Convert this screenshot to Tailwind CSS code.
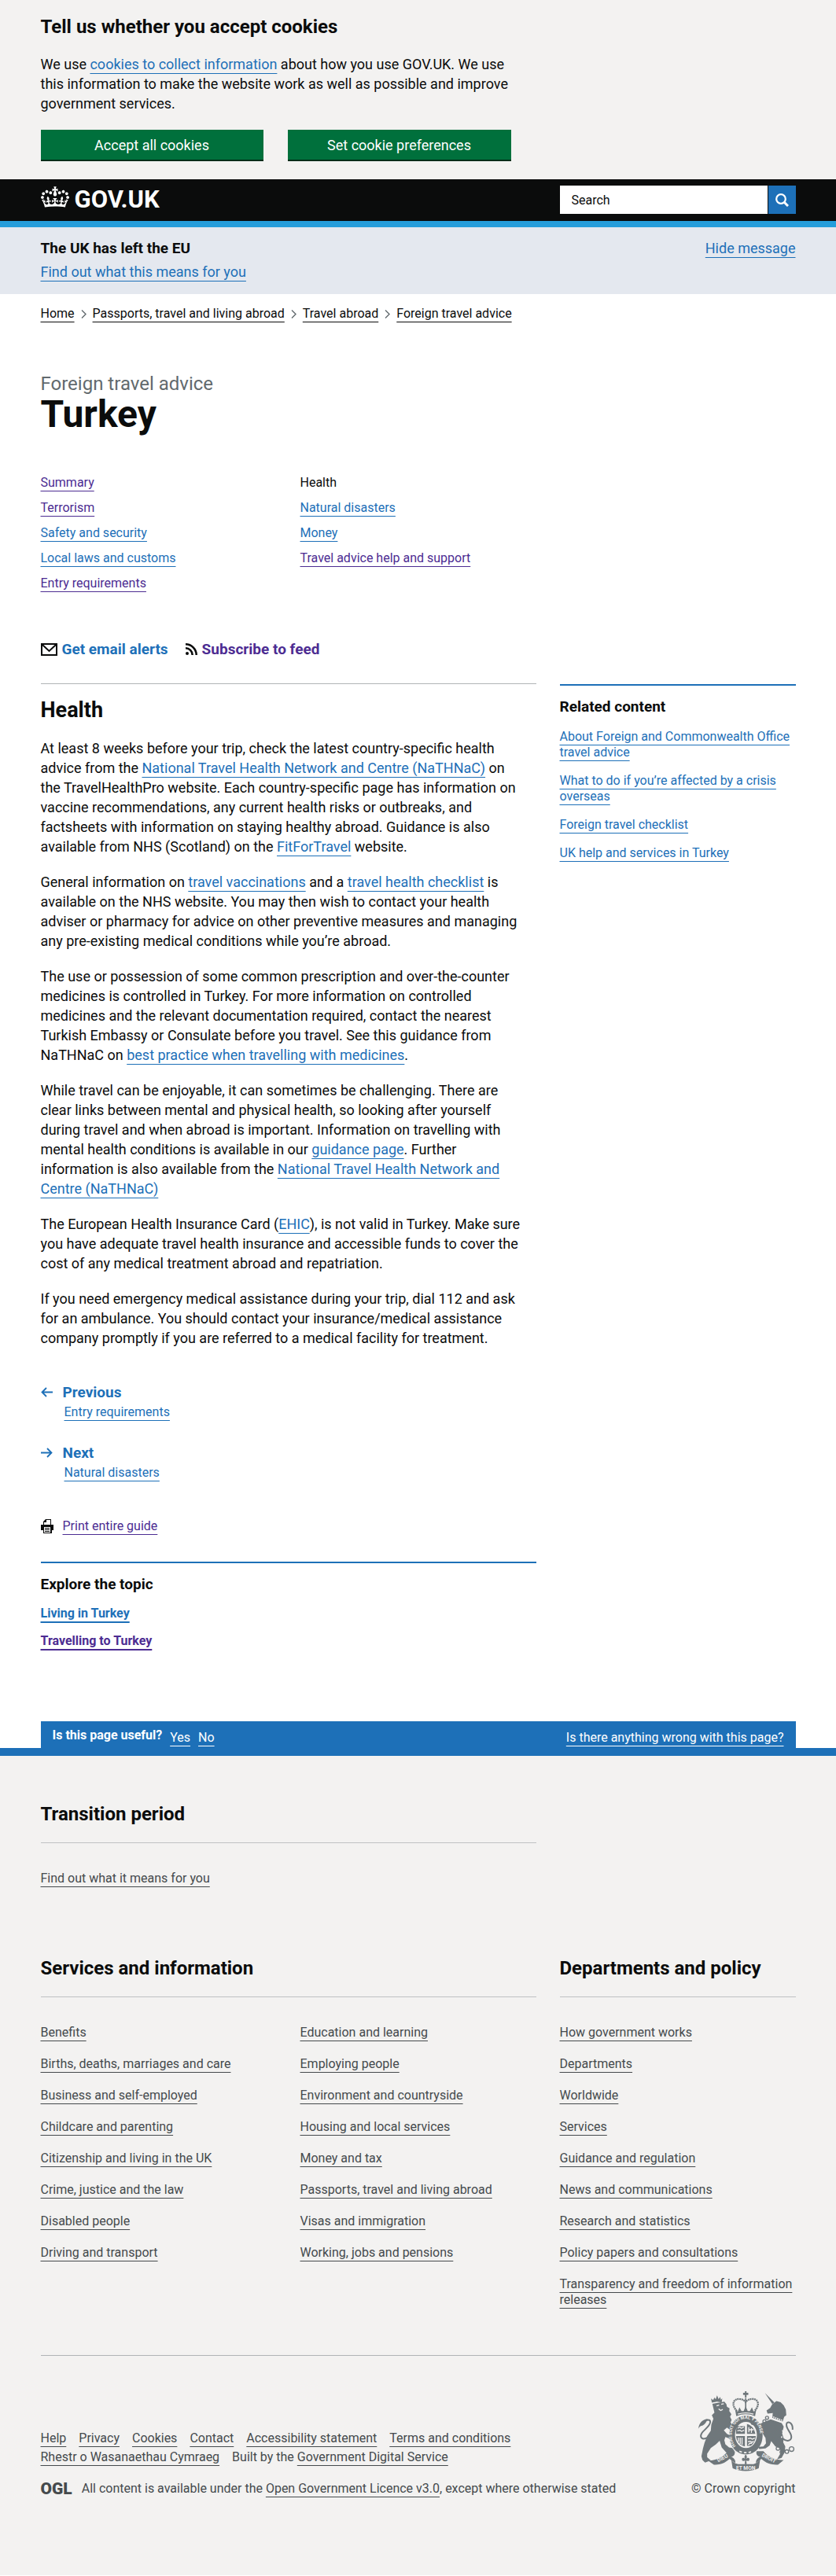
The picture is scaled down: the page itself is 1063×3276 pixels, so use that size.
<!DOCTYPE html>
<html lang="en">
<head>
<meta charset="utf-8">
<meta name="viewport" content="width=device-width, initial-scale=1">
<title>Health - Turkey travel advice - GOV.UK</title>
<script src="https://cdn.jsdelivr.net/npm/@tailwindcss/browser@4"></script>
</head>
<body class="bg-white font-['Roboto','Liberation_Sans',sans-serif] text-[18px] leading-[25px] text-[#0b0c0c] [&_a]:underline [&_a]:decoration-1 [&_a]:underline-offset-[5px] [&_a]:[text-decoration-skip-ink:none]">

<!-- Cookie banner -->
<section aria-label="Cookie banner" class="bg-[#f3f2f1] px-[30px]">
  <div class="mx-auto flex max-w-[960px] flex-col gap-[21px] pt-5 pb-[23px]">
    <h2 class="text-2xl leading-7 font-bold">Tell us whether you accept cookies</h2>
    <p class="max-w-[616px]">We use <a href="#" class="text-[#1d70b8]">cookies to collect information</a> about how you use GOV.UK. We use this information to make the website work as well as possible and improve government services.</p>
    <div class="flex flex-wrap gap-[31px]">
      <button type="button" class="h-10 w-[283px] border-b-2 border-[#002d18] bg-[#00703c] text-white">Accept all cookies</button>
      <button type="button" class="h-10 w-[284px] border-b-2 border-[#002d18] bg-[#00703c] text-white">Set cookie preferences</button>
    </div>
  </div>
</section>

<!-- Site header -->
<header class="border-b-8 border-[#259ddb] bg-[#0b0c0c] px-[30px]">
  <div class="mx-auto flex max-w-[960px] justify-between pt-2 pb-[9px]">
    <div class="flex items-center gap-[7px] text-white">
      <svg class="-mt-2 h-[27px] w-9" viewBox="0 0 132 97" fill="currentColor" aria-hidden="true"><path d="M25 30.2c3.5 1.5 7.7-.2 9.1-3.7 1.5-3.6-.2-7.8-3.9-9.2-3.6-1.4-7.6.3-9.1 3.9-1.4 3.5.3 7.5 3.9 9zM9 39.5c3.6 1.5 7.8-.2 9.2-3.7 1.5-3.6-.2-7.8-3.9-9.1-3.6-1.5-7.6.2-9.1 3.8-1.4 3.5.3 7.5 3.8 9zM4.4 57.2c3.5 1.5 7.7-.2 9.1-3.8 1.5-3.6-.2-7.7-3.9-9.1-3.5-1.5-7.6.3-9.1 3.8-1.4 3.5.3 7.6 3.9 9.1zm38.3-21.4c3.5 1.5 7.7-.2 9.1-3.8 1.5-3.6-.2-7.7-3.9-9.1-3.6-1.5-7.6.3-9.1 3.8-1.3 3.6.4 7.7 3.9 9.1zm64.4-5.6c-3.6 1.5-7.8-.2-9.1-3.7-1.5-3.6.2-7.8 3.8-9.2 3.6-1.4 7.7.3 9.2 3.9 1.3 3.5-.4 7.5-3.9 9zm15.9 9.3c-3.6 1.5-7.7-.2-9.1-3.7-1.5-3.6.2-7.8 3.7-9.1 3.6-1.5 7.7.2 9.2 3.8 1.5 3.5-.3 7.5-3.8 9zm4.7 17.7c-3.6 1.5-7.8-.2-9.2-3.8-1.5-3.6.2-7.7 3.9-9.1 3.6-1.5 7.7.3 9.2 3.8 1.3 3.5-.4 7.6-3.9 9.1zM89.3 35.8c-3.6 1.5-7.8-.2-9.2-3.8-1.4-3.6.2-7.7 3.9-9.1 3.6-1.5 7.7.3 9.2 3.8 1.4 3.6-.3 7.7-3.9 9.1zM69.7 17.7l8.9 4.7V9.3l-8.9 2.8c-.2-.3-.5-.6-.9-.9L72.4 0H59.6l3.5 11.2c-.3.3-.6.5-.9.9l-8.8-2.8v13.1l8.8-4.7c.3.3.6.7.9.9l-5 15.4v.1c-.2.8-.4 1.6-.4 2.4 0 4.1 3.1 7.5 7 8.1h.2c.3 0 .7.1 1 .1.4 0 .7 0 1-.1h.2c4-.6 7.1-4.1 7.1-8.1 0-.8-.1-1.7-.4-2.4V34l-5.1-15.4c.4-.2.7-.6 1-.9zM66 92.8c16.9 0 32.8 1.1 47.1 3.2 4-16.9 8.9-26.7 14-33.5l-9.6-3.4c1 4.9 1.1 7.2 0 10.2-1.5-1.4-3-4.3-4.2-8.7L108.6 76c2.8-2 5-3.2 7.5-3.3-4.4 9.4-10 11.9-13.6 11.2-4.3-.8-6.3-4.6-5.6-7.9 1-4.7 5.7-5.9 8-.5 4.3-8.7-3-11.4-7.6-8.8 7.1-7.2 7.9-13.5 2.1-21.1-8 6.1-8.1 12.3-4.5 20.8-4.7-5.4-12.1-2.5-9.5 6.2 3.4-5.2 7.9-2 7.2 3.1-.6 4.3-6.4 7.8-13.5 7.2-10.3-.9-10.9-8-11.2-13.8 2.5-.5 7.1 1.8 11 7.3L80.2 60c-4.1 4.4-8 5.3-12.3 5.4 1.4-4.4 8-11.6 8-11.6H55.5s6.4 7.2 7.9 11.6c-4.2-.1-8-1-12.3-5.4l1.4 16.4c3.9-5.5 8.5-7.7 10.9-7.3-.3 5.8-.9 12.8-11.1 13.8-7.2.6-12.9-2.9-13.5-7.2-.7-5 3.8-8.3 7.1-3.1 2.7-8.7-4.6-11.6-9.4-6.2 3.7-8.5 3.6-14.7-4.6-20.8-5.8 7.6-5 13.9 2.2 21.1-4.7-2.6-11.9.1-7.7 8.8 2.3-5.5 7.1-4.2 8.1.5.7 3.3-1.3 7.1-5.7 7.9-3.5.7-9-1.8-13.5-11.2 2.5.1 4.7 1.3 7.5 3.3l-4.7-15.4c-1.2 4.4-2.7 7.2-4.3 8.7-1.1-3-.9-5.3 0-10.2l-9.5 3.4c5 6.9 9.9 16.7 14 33.5 14.8-2.1 30.8-3.2 47.7-3.2z"/></svg>
      <span class="text-[31px] leading-9 font-bold">GOV.UK</span>
    </div>
    <form role="search" class="flex w-[300px] gap-px">
      <input type="search" aria-label="Search" placeholder="Search" class="h-9 min-w-0 flex-1 bg-white px-[15px] text-base placeholder:text-[#0b0c0c]">
      <button type="button" aria-label="Search GOV.UK" class="flex h-9 w-[35px] items-center justify-center bg-[#1d70b8] text-white">
        <svg class="h-[17px] w-[17px]" viewBox="0 0 17 17" fill="none" stroke="currentColor" aria-hidden="true"><circle cx="7" cy="7" r="5.8" stroke-width="2.2"/><path d="M11 11l5 5" stroke-width="3"/></svg>
      </button>
    </form>
  </div>
</header>

<section aria-label="Announcement" class="bg-[#e4e8ef] px-[30px]">
  <div class="mx-auto flex max-w-[960px] items-start justify-between pt-[14px] pb-4">
    <div>
      <p class="text-[19px] font-bold">The UK has left the EU</p>
      <p class="mt-[5px]"><a href="#" class="text-[#1d70b8]">Find out what this means for you</a></p>
    </div>
    <a href="#" class="text-[#1d70b8]">Hide message</a>
  </div>
</section>

<div class="px-[30px]">
<div class="mx-auto max-w-[960px]">
  <nav aria-label="Breadcrumb" class="pt-[15px] text-base leading-5">
    <ol class="flex flex-wrap items-center">
      <li><a href="#">Home</a></li>
      <li class="flex items-center"><svg class="mx-2 h-[11px] w-[7px]" viewBox="0 0 7 11" fill="none" stroke="#626a6e" stroke-width="1.400" aria-hidden="true"><path d="M1 .5l5 5-5 5"/></svg><a href="#">Passports, travel and living abroad</a></li>
      <li class="flex items-center"><svg class="mx-2 h-[11px] w-[7px]" viewBox="0 0 7 11" fill="none" stroke="#626a6e" stroke-width="1.400" aria-hidden="true"><path d="M1 .5l5 5-5 5"/></svg><a href="#">Travel abroad</a></li>
      <li class="flex items-center"><svg class="mx-2 h-[11px] w-[7px]" viewBox="0 0 7 11" fill="none" stroke="#626a6e" stroke-width="1.400" aria-hidden="true"><path d="M1 .5l5 5-5 5"/></svg><a href="#">Foreign travel advice</a></li>
    </ol>
  </nav>

  <div class="mt-[65px]">
    <p class="text-2xl leading-7 text-[#626a6e]">Foreign travel advice</p>
    <h1 class="text-5xl leading-[50px] font-bold">Turkey</h1>
  </div>

  <nav aria-label="Travel advice pages" class="mt-[52px] grid grid-cols-3 gap-x-[30px] text-base leading-5 text-[#1d70b8]">
    <ol class="flex flex-col gap-3">
      <li><a href="#" class="text-[#4c2c92]">Summary</a></li>
      <li><a href="#" class="text-[#4c2c92]">Terrorism</a></li>
      <li><a href="#">Safety and security</a></li>
      <li><a href="#">Local laws and customs</a></li>
      <li><a href="#" class="text-[#4c2c92]">Entry requirements</a></li>
    </ol>
    <ol class="flex flex-col gap-3">
      <li class="text-[#0b0c0c]" aria-current="page">Health</li>
      <li><a href="#">Natural disasters</a></li>
      <li><a href="#">Money</a></li>
      <li><a href="#" class="text-[#4c2c92]">Travel advice help and support</a></li>
    </ol>
  </nav>

  <div class="mt-[61px] flex gap-[22px] text-[19px] font-bold">
    <a href="#" class="flex items-center gap-[6px] text-[#1d70b8] !no-underline">
      <svg class="h-4 w-[21px]" viewBox="0 0 21 16" fill="none" stroke="#0b0c0c" stroke-width="2" aria-hidden="true"><path d="M1 1h19v14H1zM2 2l8.500 8L19 2"/></svg>Get email alerts</a>
    <a href="#" class="flex items-center gap-[6px] text-[#4c2c92] !no-underline">
      <svg class="h-[15px] w-[15px]" viewBox="0 0 15 15" fill="none" stroke="#0b0c0c" stroke-width="2.600" aria-hidden="true"><circle cx="2" cy="13" r="2" fill="#0b0c0c" stroke="none"/><path d="M0 6.300a8.700 8.700 0 0 1 8.700 8.700M0 1.300A13.700 13.700 0 0 1 13.700 15"/></svg>Subscribe to feed</a>
  </div>

  <div class="mt-[31px] grid grid-cols-3 gap-x-[30px]">
    <main class="col-span-2">
      <h2 class="border-t border-[#b1b4b6] pt-[18px] text-[27px] leading-[30px] font-bold">Health</h2>
      <div class="mt-[21px] flex max-w-[616px] flex-col gap-5 [&_a]:text-[#1d70b8]">
        <p>At least 8 weeks before your trip, check the latest country-specific health advice from the <a href="#">National Travel Health Network and Centre (NaTHNaC)</a> on the TravelHealthPro website. Each country-specific page has information on vaccine recommendations, any current health risks or outbreaks, and factsheets with information on staying healthy abroad. Guidance is also available from NHS (Scotland) on the <a href="#">FitForTravel</a> website.</p>
        <p>General information on <a href="#">travel vaccinations</a> and a <a href="#">travel health checklist</a> is available on the NHS website. You may then wish to contact your health adviser or pharmacy for advice on other preventive measures and managing any pre-existing medical conditions while you’re abroad.</p>
        <p>The use or possession of some common prescription and over-the-counter medicines is controlled in Turkey. For more information on controlled medicines and the relevant documentation required, contact the nearest Turkish Embassy or Consulate before you travel. See this guidance from NaTHNaC on <a href="#">best practice when travelling with medicines</a>.</p>
        <p>While travel can be enjoyable, it can sometimes be challenging. There are clear links between mental and physical health, so looking after yourself during travel and when abroad is important. Information on travelling with mental health conditions is available in our <a href="#">guidance page</a>. Further information is also available from the <a href="#">National Travel Health Network and Centre (NaTHNaC)</a></p>
        <p>The European Health Insurance Card (<a href="#">EHIC</a>), is not valid in Turkey. Make sure you have adequate travel health insurance and accessible funds to cover the cost of any medical treatment abroad and repatriation.</p>
        <p>If you need emergency medical assistance during your trip, dial 112 and ask for an ambulance. You should contact your insurance/medical assistance company promptly if you are referred to a medical facility for treatment.</p>
      </div>

      <nav aria-label="Pagination" class="mt-11 flex flex-col gap-[29px] text-[#1d70b8]">
        <div>
          <p class="flex items-center gap-[13px] text-[19px] font-bold"><svg class="h-[13px] w-[15px]" viewBox="0 0 15 13" fill="none" stroke="currentColor" stroke-width="1.800" aria-hidden="true"><path d="M15 6.500H1.500M7 1L1.500 6.500 7 12"/></svg>Previous</p>
          <p class="mt-[3px] ml-[30px] text-base leading-5"><a href="#">Entry requirements</a></p>
        </div>
        <div>
          <p class="flex items-center gap-[13px] text-[19px] font-bold"><svg class="h-[13px] w-[15px]" viewBox="0 0 15 13" fill="none" stroke="currentColor" stroke-width="1.800" aria-hidden="true"><path d="M0 6.500h13.500M8 1l5.500 5.500L8 12"/></svg>Next</p>
          <p class="mt-[3px] ml-[30px] text-base leading-5"><a href="#">Natural disasters</a></p>
        </div>
      </nav>

      <p class="mt-12 flex items-center gap-3 text-base leading-5">
        <svg class="h-[18px] w-4" viewBox="0 0 16 18" aria-hidden="true"><path fill="#0b0c0c" d="M6 0h7v7h3v7h-2v4H3v-4H0V7h3V3z"/><path fill="#fff" d="M7 1h5v6H4V4h3zM4 10h8v7H4z"/><path stroke="#0b0c0c" d="M5 11.500h6M5 13.500h6M5 15.500h6"/></svg>
        <a href="#" class="text-[#4c2c92]">Print entire guide</a>
      </p>

      <section class="mt-[35px] border-t-2 border-[#1d70b8] pt-[14px]">
        <h2 class="text-[19px] font-bold">Explore the topic</h2>
        <ul class="mt-[15px] flex flex-col gap-[15px] text-base leading-5 font-bold [&_a]:decoration-2">
          <li><a href="#" class="text-[#1d70b8]">Living in Turkey</a></li>
          <li><a href="#" class="text-[#4c2c92]">Travelling to Turkey</a></li>
        </ul>
      </section>
    </main>

    <aside class="mt-px">
      <h2 class="border-t-2 border-[#1d70b8] pt-[14px] text-[19px] font-bold">Related content</h2>
      <ul class="mt-4 flex flex-col gap-4 text-base leading-5 text-[#1d70b8]">
        <li><a href="#">About Foreign and Commonwealth Office travel advice</a></li>
        <li><a href="#">What to do if you’re affected by a crisis overseas</a></li>
        <li><a href="#">Foreign travel checklist</a></li>
        <li><a href="#">UK help and services in Turkey</a></li>
      </ul>
    </aside>
  </div>

  <!-- Feedback -->
  <div class="mt-[92px] flex h-[34px] items-start justify-between bg-[#1d70b8] px-[15px] pt-2 text-base leading-5 text-white">
    <div class="flex gap-[10px]">
      <h2 class="font-bold">Is this page useful?</h2>
      <a href="#" class="mt-[3px]">Yes</a>
      <a href="#" class="mt-[3px]">No</a>
    </div>
    <a href="#" class="mt-[3px]">Is there anything wrong with this page?</a>
  </div>
</div>
</div>

<!-- Footer -->
<footer class="border-t-10 border-[#1d70b8] bg-[#f3f2f1] px-[30px] text-base leading-5 text-[#454a4d]">
  <div class="mx-auto max-w-[960px] pt-[59px] pb-[100px]">
    <div class="grid grid-cols-3 gap-x-[30px]">
      <section class="col-span-2">
        <h2 class="border-b border-[#bfc1c3] pb-[21px] text-2xl leading-[30px] font-bold text-[#0b0c0c]">Transition period</h2>
        <p class="mt-[35px]"><a href="#">Find out what it means for you</a></p>
      </section>
    </div>
    <div class="mt-[89px] grid grid-cols-3 gap-x-[30px]">
      <section class="col-span-2">
        <h2 class="border-b border-[#bfc1c3] pb-[21px] text-2xl leading-[30px] font-bold text-[#0b0c0c]">Services and information</h2>
        <div class="mt-[35px] grid grid-cols-2 gap-x-[30px]">
          <ul class="flex flex-col gap-5">
            <li><a href="#">Benefits</a></li>
            <li><a href="#">Births, deaths, marriages and care</a></li>
            <li><a href="#">Business and self-employed</a></li>
            <li><a href="#">Childcare and parenting</a></li>
            <li><a href="#">Citizenship and living in the UK</a></li>
            <li><a href="#">Crime, justice and the law</a></li>
            <li><a href="#">Disabled people</a></li>
            <li><a href="#">Driving and transport</a></li>
          </ul>
          <ul class="flex flex-col gap-5">
            <li><a href="#">Education and learning</a></li>
            <li><a href="#">Employing people</a></li>
            <li><a href="#">Environment and countryside</a></li>
            <li><a href="#">Housing and local services</a></li>
            <li><a href="#">Money and tax</a></li>
            <li><a href="#">Passports, travel and living abroad</a></li>
            <li><a href="#">Visas and immigration</a></li>
            <li><a href="#">Working, jobs and pensions</a></li>
          </ul>
        </div>
      </section>
      <section>
        <h2 class="border-b border-[#bfc1c3] pb-[21px] text-2xl leading-[30px] font-bold text-[#0b0c0c]">Departments and policy</h2>
        <ul class="mt-[35px] flex flex-col gap-5">
          <li><a href="#">How government works</a></li>
          <li><a href="#">Departments</a></li>
          <li><a href="#">Worldwide</a></li>
          <li><a href="#">Services</a></li>
          <li><a href="#">Guidance and regulation</a></li>
          <li><a href="#">News and communications</a></li>
          <li><a href="#">Research and statistics</a></li>
          <li><a href="#">Policy papers and consultations</a></li>
          <li><a href="#">Transparency and freedom of information releases</a></li>
        </ul>
      </section>
    </div>

    <div class="mt-[60px] flex items-end justify-between gap-[30px] border-t border-[#b1b4b6] pt-[45px]">
      <div class="flex-1">
        <ul class="flex flex-wrap gap-x-4 leading-6">
          <li><a href="#">Help</a></li>
          <li><a href="#">Privacy</a></li>
          <li><a href="#">Cookies</a></li>
          <li><a href="#">Contact</a></li>
          <li><a href="#">Accessibility statement</a></li>
          <li><a href="#">Terms and conditions</a></li>
          <li><a href="#">Rhestr o Wasanaethau Cymraeg</a></li>
          <li>Built by the <a href="#">Government Digital Service</a></li>
        </ul>
        <div class="mt-[18px] flex items-center gap-3">
          <span class="text-[21px] leading-5 font-black">OGL</span>
          <p>All content is available under the <a href="#">Open Government Licence v3.0</a>, except where otherwise stated</p>
        </div>
      </div>
      <div class="flex flex-col items-end gap-3">
        <!-- Royal coat of arms -->
        <svg class="h-[102px] w-[125px]" viewBox="50 62 376 308" fill="#6f777b" aria-hidden="true">
          <!-- lion -->
          <path d="M104 106L101 90l8 6 5-10 5 7 5-15 6 14 6-8 3 11 5-6-2 16-18-3z"/>
          <path d="M106 110l46-8 8 10 2 10 10 6-1 10 8 12-5 10 6 12-4 10 8 12 0 10 6 10-8 2-20-14-12 10 12 14 26 12 6 12-12-2-26-10-4 12 4 16 14 12 12 2 8 10-4 10-26-2-18-20-8-26-14 14-20 14-14 22 0 14 14 12-22 8-10-10-4-14 6-30 6-22 10-26 14-20 2-24 8-22-6-14 10-10z"/>
          <path d="M122 118l10-3M140 112l10-2M130 130l8 6 8-4" stroke="#f3f2f1" stroke-width="4" fill="none"/>
          <path d="M88 240c-22 12-32-2-22-18 8-12 32-26 32-42 0-10-12-10-22-2" stroke="#6f777b" stroke-width="6" fill="none"/>
          <path d="M52 206c4-24 18-36 36-38-4 12-10 22-20 26-6 0-12 4-16 12z"/>
          <!-- unicorn -->
          <path d="M308 69l36 36-8 6z"/>
          <path d="M336 112l16-12 16 4 12 12 8 16 2 22-8 6-6 18-40-14 2-18-20 2-4-12 14-10z"/>
          <path d="M330 170l42 14 8 14-6 26 6 20-2 14 8 16-2 22-12 22-18 6 14-24-2-18-18-8-16-20-6 16-16 12-24 2-4-8 20-2 10-12-2-20-12-20-8-16-22-12-12-4-6-10 12-4 12 6 18 4z"/>
          <path d="M376 244c20 16 38 6 32-14-6-18-24-30-16-46 10-8 24 4 22 26" stroke="#6f777b" stroke-width="6" fill="none"/>
          <path d="M332 158l42 16M376 212v8M372 236v8" stroke="#f3f2f1" stroke-width="5" stroke-dasharray="5 3"/>
          <g fill="none" stroke="#6f777b" stroke-width="4"><circle cx="358" cy="282" r="7"/><circle cx="372" cy="296" r="6"/><circle cx="392" cy="294" r="7"/><circle cx="410" cy="284" r="9"/><circle cx="316" cy="164" r="6"/><circle cx="306" cy="178" r="6"/></g>
          <!-- crown -->
          <path d="M231 62h6v6h7v8h-7v10h-6V76h-7v-8h7z"/>
          <g fill="none" stroke="#6f777b"><path d="M200 138c-24-26-12-48 10-46 12 0 20 6 24 12 4-6 12-12 24-12 22-2 34 20 10 46" stroke-width="7" stroke-dasharray="6 2"/><path d="M234 88v48" stroke-width="5"/></g>
          <path d="M198 158l-4-22 10 4 6-16 8 14 8 0 8-18 8 18 8 0 8-14 6 16 10-4-4 22c-24-10-48-10-72 0z"/>
          <path d="M204 150c20-6 40-6 60 0" stroke="#f3f2f1" stroke-width="4" fill="none"/>
          <!-- garter and shield -->
          <path fill-rule="evenodd" d="M235 156c38 0 64 32 64 74s-26 74-64 74-64-32-64-74 26-74 64-74zm0 24c-24 0-42 22-42 50s18 50 42 50 42-22 42-50-18-50-42-50z"/>
          <path id="garter" fill="none" d="M196 272c-28-28-20-102 39-104 59 2 67 76 39 104"/>
          <text font-family="Roboto" font-weight="700" font-size="17" fill="#f3f2f1"><textPath href="#garter">HONI SOIT QUI MAL Y PENSE</textPath></text>
          <path d="M210 292c16 8 34 8 50 0" stroke="#f3f2f1" stroke-width="5" stroke-dasharray="10 8" fill="none"/>
          <path d="M201 196h30v30h-34c-1-12 1-22 4-30zM239 234h34c-2 16-8 30-20 38h-14z"/>
          <path d="M239 188c16 4 28 16 32 38h-32z"/>
          <path d="M197 234h34v40c-20-4-32-20-34-40z"/>
          <g stroke="#f3f2f1" stroke-width="4" fill="none"><path d="M203 204l8-4 6 4 10-4M202 214l10-2 6 4 10-4M244 268l6-6 8 0M243 244l10-2 6 4 10-4M243 256l8-2 8 4 6-4"/><path d="M246 200v20M256 204v18M244 210h20M206 240v16M213 240v24M220 240v28"/></g>
          <!-- motto ribbon -->
          <path d="M88 328c30 2 60-14 78-36l26 0c2 12-4 20-14 22 12 4 18 14 16 24l-22-16c-18 18-42 24-60 22z"/>
          <path d="M380 326c-30 2-60-12-78-34l-26 0c-4 12 4 20 14 22-12 4-18 14-16 24l20-16c18 18 44 24 64 22z"/>
          <path d="M178 322c6 14 16 18 26 20h60c10-2 20-8 26-20l-6 36c-30 14-70 14-100 0z"/>
          <path d="M234 304c6 8 6 12 2 18 8-8 14-4 12 4 -2 6-10 4-12 2l2 14h-8l2-14c-2 2-10 4-12-2-2-8 4-12 12-4-4-6-4-10 2-18z"/>
          <g font-family="Roboto" font-weight="700" font-size="20" fill="#f3f2f1" text-anchor="middle"><text x="234" y="363">ET MON</text><text transform="translate(148 325) rotate(-27)">DIEU</text><text transform="translate(320 325) rotate(27)">DROIT</text></g>
        </svg>
        <p>© Crown copyright</p>
      </div>
    </div>
  </div>
</footer>
</body>
</html>
